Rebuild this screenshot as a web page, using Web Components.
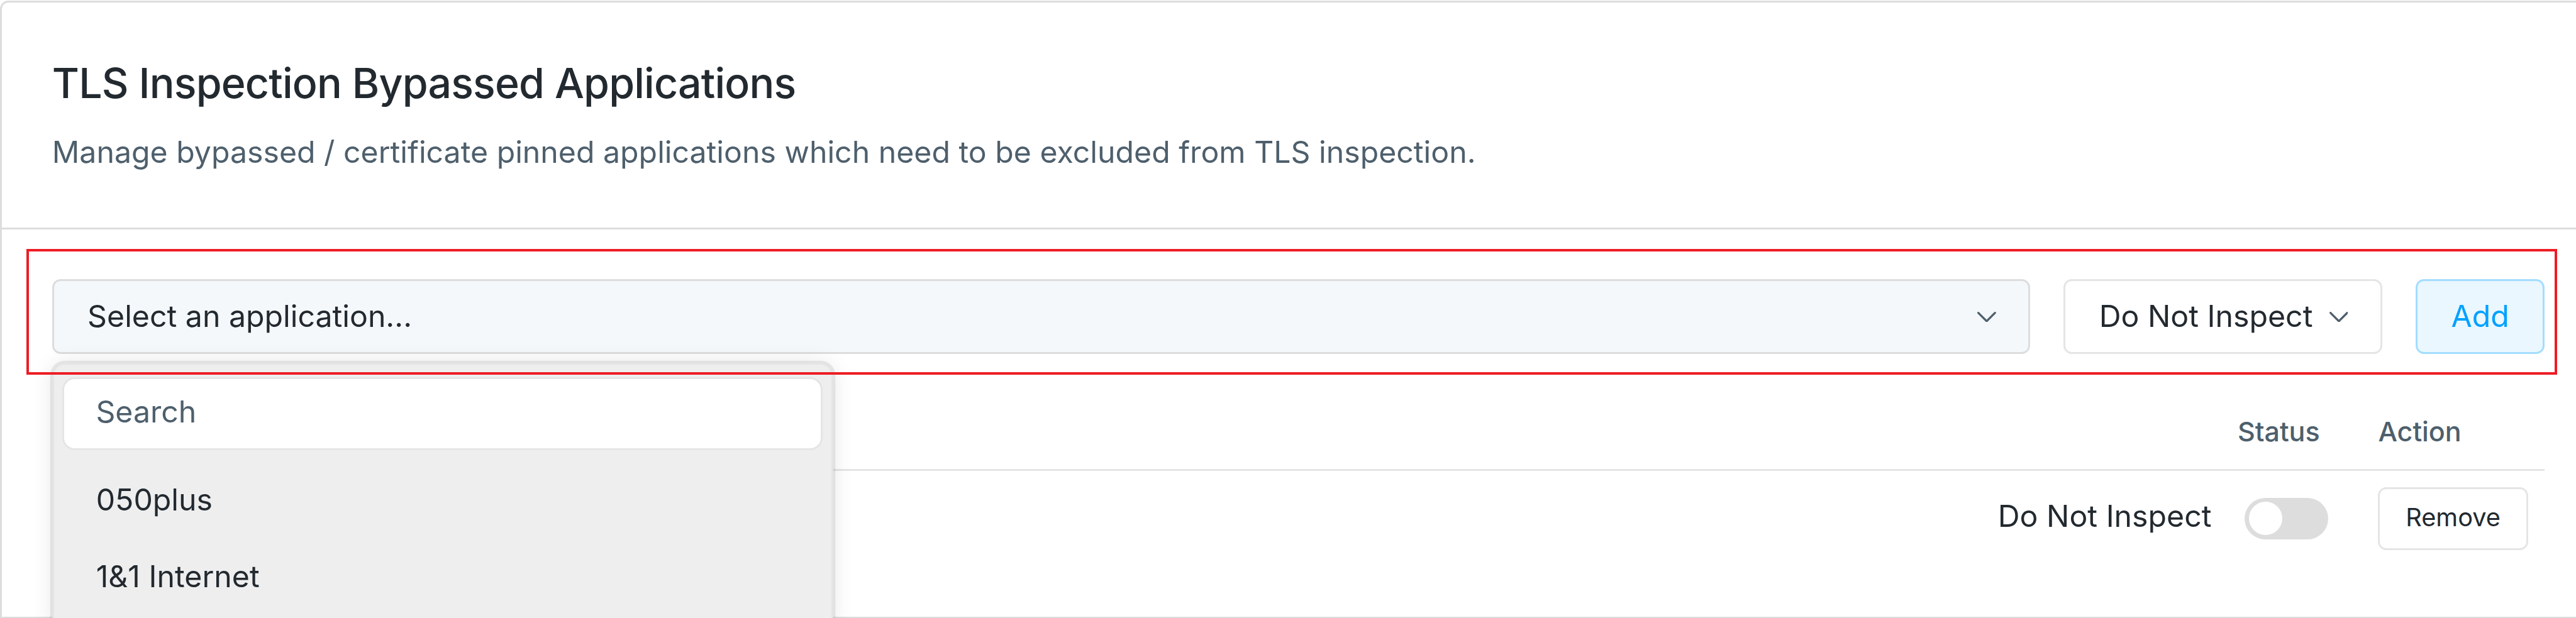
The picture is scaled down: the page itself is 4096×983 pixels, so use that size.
<!DOCTYPE html>
<html lang="en">
<head>
<meta charset="utf-8">
<title>TLS Inspection</title>
<style>
    /* 1rem is one design pixel, everything below is sized in rem */
    html {
        font-size: 3.3112px;
    }
    html, body {
        margin: 0;
        width: 100%;
        height: 100%;
        overflow: hidden;
        background-color: #fff;
    }
    body {
        box-sizing: border-box;
        padding-top: 0.25rem;
        font-family: Inter, "Liberation Sans", sans-serif;
        font-size: 14.565rem;
        color: #22292f;
    }
</style>
</head>
<body>
<tls-card>
    <span slot="title">TLS Inspection Bypassed Applications</span>
    <span slot="description">Manage bypassed / certificate pinned applications which need to be excluded from TLS inspection.</span>
    <tls-toolbar>
        <tls-select class="app" filled>
            Select an application...
            <tls-menu slot="menu">
                <tls-option>050plus</tls-option>
                <tls-option>1&amp;1 Internet</tls-option>
            </tls-menu>
        </tls-select>
        <tls-select class="mode">Do Not Inspect</tls-select>
        <tls-button class="add" primary>Add</tls-button>
    </tls-toolbar>
    <tls-table>
        <span slot="status">Status</span>
        <span slot="action">Action</span>
        <tls-row>
            Do Not Inspect
            <tls-toggle slot="toggle"></tls-toggle>
            <tls-button slot="action" small>Remove</tls-button>
        </tls-row>
    </tls-table>
</tls-card>

<script>
// base class: puts the static template of the element into its shadow root
class TlsElement extends HTMLElement {
    constructor() {
        super()
        this.attachShadow({ mode: 'open' })
        this.shadowRoot.innerHTML = this.constructor.template
    }
}

class TlsCard extends TlsElement {
    static template = `
        <style>
            :host {
                display: block;
                box-sizing: border-box;
                width: 1247rem;
                height: 297rem;
                border: 1rem solid #ddd;
                border-radius: 4rem 4rem 0 0;
            }
            header {
                box-sizing: border-box;
                height: 109rem;
                padding: 24.8rem 24.1rem 0;
                border-bottom: 1rem solid #ddd;
            }
            h2, p {
                margin: 0;
                white-space: nowrap;
            }
            h2 {
                font-size: 20rem;
                font-weight: 500;
                line-height: 28rem;
                letter-spacing: -0.25rem;
            }
            p {
                margin-top: 8.4rem;
                line-height: 22rem;
                color: #4e5f6c;
            }
            .body {
                padding: 24rem 24.1rem;
            }
        </style>
        <header>
            <h2><slot name="title"></slot></h2>
            <p><slot name="description"></slot></p>
        </header>
        <div class="body"><slot></slot></div>
    `
}

class TlsToolbar extends TlsElement {
    static template = `
        <style>
            :host {
                display: flex;
                gap: 16rem;
                position: relative;
                z-index: 1;
                height: 36rem;
            }
            ::slotted(.app) {
                flex: 1;
            }
            ::slotted(.mode) {
                width: 153rem;
            }
            ::slotted(.add) {
                width: 62rem;
            }
            .highlight {
                position: absolute;
                top: -14.5rem;
                right: -6rem;
                bottom: -9.75rem;
                left: -12.25rem;
                border: 1.25rem solid #ed1c24;
                z-index: 10;
                pointer-events: none;
            }
        </style>
        <slot></slot>
        <div class="highlight"></div>
    `
}

class TlsSelect extends TlsElement {
    static template = `
        <style>
            :host {
                display: flex;
                align-items: center;
                justify-content: space-between;
                box-sizing: border-box;
                position: relative;
                padding: 0 15.6rem 0 16.1rem;
                border: 1rem solid #e5e5e5;
                border-radius: 4rem;
                background-color: #fff;
                white-space: nowrap;
            }
            :host([filled]) {
                border-color: #ddd;
                background-color: #f4f8fb;
            }
            .label {
                line-height: 22rem;
                margin-bottom: 0.4rem;
            }
            svg {
                display: block;
                width: 9rem;
                height: 5rem;
            }
        </style>
        <div class="label"><slot></slot></div>
        <svg viewBox="0 0 9 5" fill="none" stroke="#4e5f6c" stroke-linecap="round" stroke-linejoin="round">
            <path d="M.5 .5l4 4 4-4"/>
        </svg>
        <slot name="menu"></slot>
    `
}

class TlsMenu extends TlsElement {
    static template = `
        <style>
            :host {
                display: block;
                box-sizing: border-box;
                position: absolute;
                top: 39.2rem;
                left: -0.9rem;
                width: 375rem;
                height: 130rem;
                padding: 6.1rem 4.1rem;
                border: 1rem solid #e4e4e4;
                border-radius: 6rem;
                background-color: #eee;
                box-shadow: 0 0 0 1rem rgba(0, 0, 0, 0.07), 0 0 10rem rgba(0, 0, 0, 0.1);
            }
            .search {
                box-sizing: border-box;
                height: 35rem;
                padding: 4.9rem 15.1rem 0;
                border: 1rem solid #e5e5e5;
                border-radius: 6rem;
                background-color: #fff;
                line-height: 22rem;
                color: #4e5f6c;
            }
            .list {
                padding-top: 5.3rem;
            }
        </style>
        <div class="search">Search</div>
        <div class="list"><slot></slot></div>
    `
}

class TlsOption extends TlsElement {
    static template = `
        <style>
            :host {
                display: block;
                height: 37rem;
                padding-left: 16.1rem;
                line-height: 37rem;
            }
        </style>
        <slot></slot>
    `
}

class TlsButton extends TlsElement {
    static template = `
        <style>
            :host {
                display: flex;
                align-items: center;
                justify-content: center;
                box-sizing: border-box;
                border: 1rem solid #e5e5e5;
                border-radius: 4rem;
                background-color: #fff;
            }
            :host([primary]) {
                border-color: #a3ddff;
                background-color: #eaf7ff;
                color: #00a1ff;
            }
            :host([small]) {
                width: 72rem;
                height: 30rem;
                font-size: 12rem;
            }
            div {
                margin-bottom: 0.5rem;
                line-height: 1.4;
            }
        </style>
        <div><slot></slot></div>
    `
}

class TlsToggle extends TlsElement {
    static template = `
        <style>
            :host {
                display: block;
                box-sizing: border-box;
                width: 40rem;
                height: 20rem;
                padding: 2rem;
                border-radius: 10rem;
                background-color: #ddd;
            }
            .knob {
                width: 16rem;
                height: 16rem;
                border-radius: 50%;
                background-color: #fff;
            }
        </style>
        <div class="knob"></div>
    `
}

class TlsTable extends TlsElement {
    static template = `
        <style>
            :host {
                display: block;
            }
            .head {
                display: grid;
                grid-template-columns: 1fr 67.5rem 80rem;
                box-sizing: border-box;
                height: 56rem;
                padding-top: 27.2rem;
                border-bottom: 1rem solid #e5e5e5;
                font-size: 13rem;
                font-weight: 500;
                line-height: 20rem;
                color: #4e5f6c;
            }
        </style>
        <div class="head">
            <div></div>
            <div><slot name="status"></slot></div>
            <div><slot name="action"></slot></div>
        </div>
        <slot></slot>
    `
}

class TlsRow extends TlsElement {
    static template = `
        <style>
            :host {
                display: flex;
                align-items: center;
                justify-content: flex-end;
                height: 46rem;
                padding-right: 8rem;
            }
            .mode {
                margin: 0 16rem 2.3rem 0;
                line-height: 22rem;
            }
            .action {
                margin-left: 24rem;
            }
        </style>
        <div class="mode"><slot></slot></div>
        <slot name="toggle"></slot>
        <div class="action"><slot name="action"></slot></div>
    `
}

customElements.define('tls-card', TlsCard)
customElements.define('tls-toolbar', TlsToolbar)
customElements.define('tls-select', TlsSelect)
customElements.define('tls-menu', TlsMenu)
customElements.define('tls-option', TlsOption)
customElements.define('tls-button', TlsButton)
customElements.define('tls-toggle', TlsToggle)
customElements.define('tls-table', TlsTable)
customElements.define('tls-row', TlsRow)
</script>
</body>
</html>
